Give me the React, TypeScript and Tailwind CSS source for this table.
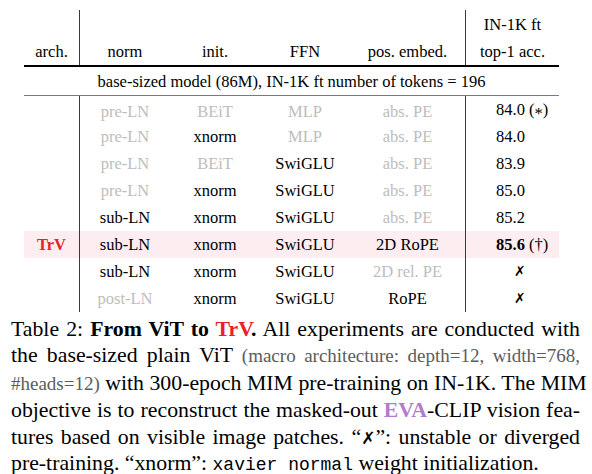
import React from "react";

type Cell = { t: string; dim?: boolean };

const ROWS: {
  arch?: string;
  norm: Cell;
  init: Cell;
  ffn: Cell;
  pos: Cell;
  acc: string;
  star?: boolean;
  bold?: boolean;
  fail?: boolean;
  hl?: boolean;
}[] = [
  { norm: { t: "pre-LN", dim: true }, init: { t: "BEiT", dim: true }, ffn: { t: "MLP", dim: true }, pos: { t: "abs. PE", dim: true }, acc: "84.0", star: true },
  { norm: { t: "pre-LN", dim: true }, init: { t: "xnorm" }, ffn: { t: "MLP", dim: true }, pos: { t: "abs. PE", dim: true }, acc: "84.0" },
  { norm: { t: "pre-LN", dim: true }, init: { t: "BEiT", dim: true }, ffn: { t: "SwiGLU" }, pos: { t: "abs. PE", dim: true }, acc: "83.9" },
  { norm: { t: "pre-LN", dim: true }, init: { t: "xnorm" }, ffn: { t: "SwiGLU" }, pos: { t: "abs. PE", dim: true }, acc: "85.0" },
  { norm: { t: "sub-LN" }, init: { t: "xnorm" }, ffn: { t: "SwiGLU" }, pos: { t: "abs. PE", dim: true }, acc: "85.2" },
  { arch: "TrV", norm: { t: "sub-LN" }, init: { t: "xnorm" }, ffn: { t: "SwiGLU" }, pos: { t: "2D RoPE" }, acc: "85.6", bold: true, hl: true },
  { norm: { t: "sub-LN" }, init: { t: "xnorm" }, ffn: { t: "SwiGLU" }, pos: { t: "2D rel. PE", dim: true }, acc: "", fail: true },
  { norm: { t: "post-LN", dim: true }, init: { t: "xnorm" }, ffn: { t: "SwiGLU" }, pos: { t: "RoPE" }, acc: "", fail: true },
];

const GRID = "grid grid-cols-[56px_90px_90px_90px_115px_94px]";

function C({ c }: { c: Cell }) {
  return (
    <div className={`flex items-center justify-center ${c.dim ? "text-[#bdbdbd]" : "text-black"}`}>
      {c.t}
    </div>
  );
}

const Fail = () => (
  <span className="[font-family:'DejaVu_Sans',sans-serif] text-[14px] font-bold">✗</span>
);

const line = "text-justify [text-align-last:justify] whitespace-nowrap";
const grey = "text-[19px] text-[#5c5c5c]";

export default function App() {
  return (
    <div className="h-[474px] w-[592px] overflow-hidden bg-white [font-family:'Liberation_Serif',serif] text-black">
      {/* Table */}
      <div className="ml-[24px] w-[535px] pt-[10px] text-[16.5px] leading-[27px]">
        <div className={`${GRID} h-[55px]`}>
          <div className="flex items-end justify-center border-r border-[#3a3a3a]">arch.</div>
          <div className="flex items-end justify-center">norm</div>
          <div className="flex items-end justify-center">init.</div>
          <div className="flex items-end justify-center">FFN</div>
          <div className="flex items-end justify-center">pos. embed.</div>
          <div className="flex flex-col items-center justify-end border-l border-[#3a3a3a]">
            <span>IN-1K ft</span>
            <span>top-1 acc.</span>
          </div>
        </div>
        <div className="h-[2px] bg-black" />
        <div className="flex h-[28px] items-center justify-center">
          base-sized model (86M), IN-1K ft number of tokens = 196
        </div>
        <div className="h-px bg-[#7a7a7a]" />
        {ROWS.map((r, i) => (
          <div key={i} className={`${GRID} h-[27px] ${r.hl ? "bg-[#fdedf0]" : ""}`}>
            <div className="flex items-center justify-center border-r border-[#3a3a3a] font-bold text-[#e8202a]">
              {r.arch}
            </div>
            <C c={r.norm} />
            <C c={r.init} />
            <C c={r.ffn} />
            <C c={r.pos} />
            <div className={`flex items-center border-l border-[#3a3a3a] ${r.fail ? "pl-[48px]" : "pl-[30px]"}`}>
              {r.fail ? (
                <Fail />
              ) : r.bold ? (
                <span>
                  <b>{r.acc}</b> (†)
                </span>
              ) : r.star ? (
                <span>
                  {r.acc} (<span className="align-[-4px]">*</span>)
                </span>
              ) : (
                r.acc
              )}
            </div>
          </div>
        ))}
      </div>

      {/* Caption */}
      <div className="ml-[11px] mt-[4px] w-[569px] text-[21.8px] leading-[26.4px]">
        <div className={line}>
          Table 2: <b>From ViT to <span className="text-[#e8202a]">TrV</span>.</b> All experiments are conducted with
        </div>
        <div className={line}>
          the base-sized plain ViT <span className={grey}>(macro architecture: depth=12, width=768,</span>
        </div>
        <div className={line}>
          <span className={grey}>#heads=12)</span> with 300-epoch MIM pre-training on IN-1K. The MIM
        </div>
        <div className={line}>
          objective is to reconstruct the masked-out <b className="text-[#b07cd0]">EVA</b>-CLIP vision fea-
        </div>
        <div className={line}>
          tures based on visible image patches. “<span className="[font-family:'DejaVu_Sans',sans-serif] text-[17px] font-bold">✗</span>”: unstable or diverged
        </div>
        <div className="whitespace-nowrap leading-[24px]">
          pre-training. “xnorm”: <span className="[font-family:'Liberation_Mono',monospace] text-[18px]">xavier normal</span> weight initialization.
        </div>
      </div>
    </div>
  );
}
